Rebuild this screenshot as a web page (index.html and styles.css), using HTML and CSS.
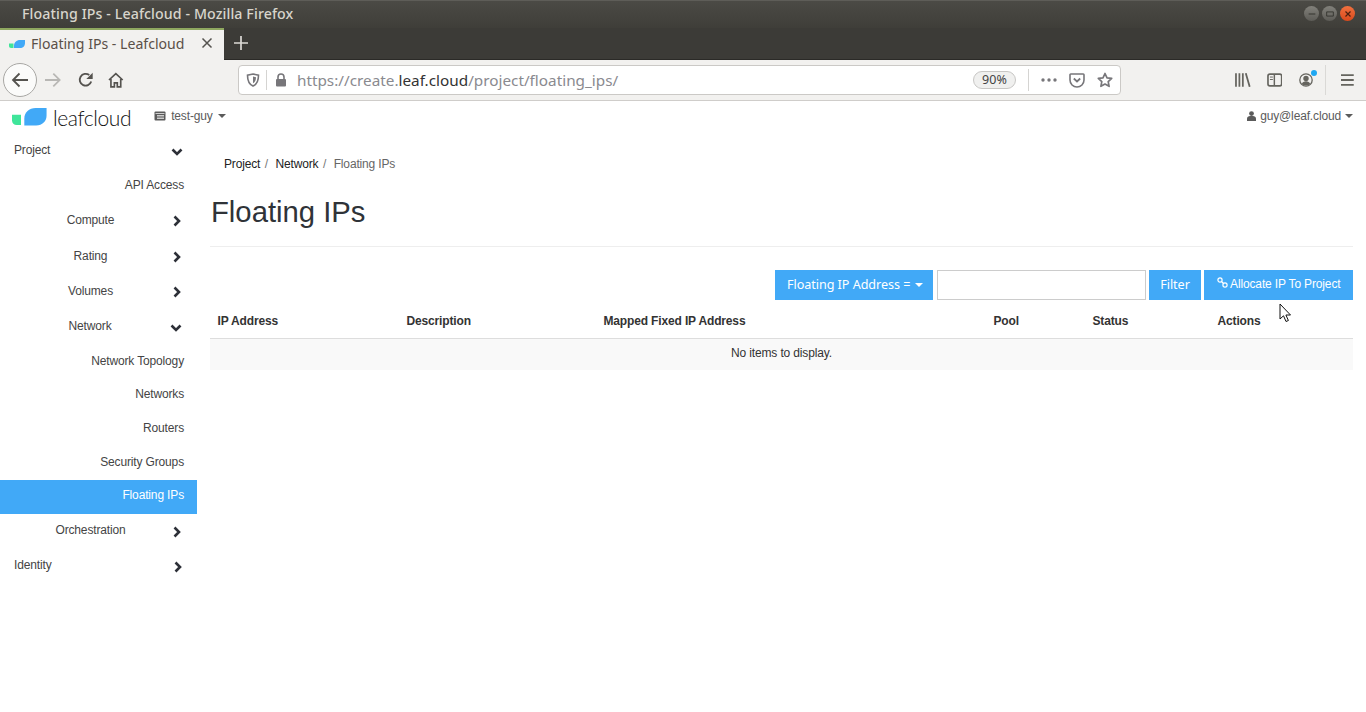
FILE: index.html
```html
<!DOCTYPE html>
<html lang="en">
<head>
<meta charset="utf-8">
<title>Floating IPs - Leafcloud</title>
<link rel="stylesheet" href="styles.css">
</head>
<body>
<div class="browser">
  <div class="titlebar">
    <span class="window-title">Floating IPs - Leafcloud - Mozilla Firefox</span>
    <div class="window-controls">
      <span class="win-btn"><svg width="12" height="12" viewBox="0 0 12 12"><path d="M2 6h8" stroke="#35342f" stroke-width="1.2"/></svg></span>
      <span class="win-btn"><svg width="12" height="12" viewBox="0 0 12 12"><path d="M2 3.5h8v5H2z" fill="none" stroke="#35342f" stroke-width="1.1"/></svg></span>
      <span class="win-btn win-close"><svg width="12" height="12" viewBox="0 0 12 12"><path d="M3 3l6 6M9 3l-6 6" stroke="#4a2010" stroke-width="1.4"/></svg></span>
    </div>
  </div>
  <div class="tabstrip">
    <div class="tab">
      <svg class="favicon" width="16" height="8" viewBox="0 0 16 8"><path d="M0 3.5h4.5V8H2C.8 8 0 7.2 0 6z" fill="#3fe59a"/><path d="M5 5.5C5 2.5 7.5 0 11 0h5v3c0 3-2 5-5 5H5z" fill="#41a9f7"/></svg>
      <span class="tab-title">Floating IPs - Leafcloud</span>
      <svg class="tab-close" width="12" height="12" viewBox="0 0 12 12"><path d="M1.5 1.5l9 9M10.5 1.5l-9 9" stroke="#55534f" stroke-width="1.5"/></svg>
    </div>
    <svg class="new-tab" width="14" height="14" viewBox="0 0 14 14"><path d="M7 0v14M0 7h14" stroke="#dcdad5" stroke-width="1.7"/></svg>
  </div>
  <div class="toolbar">
    <span class="back-btn"><svg width="18" height="16" viewBox="0 0 18 16"><path d="M17 8H2M8.5 1.5L2 8l6.5 6.5" fill="none" stroke="#55534f" stroke-width="1.8"/></svg></span>
    <svg class="forward" width="18" height="16" viewBox="0 0 18 16"><path d="M1 8h15M9.500 1.500L16 8l-6.500 6.500" fill="none" stroke="#b8b7b4" stroke-width="1.800"/></svg>
    <svg class="reload" width="16" height="16" viewBox="0 0 16 16"><path d="M13.500 9.500A6 6 0 1 1 11.500 3" fill="none" stroke="#55534f" stroke-width="1.900"/><path d="M15 .5v6.500H8.500z" fill="#55534f"/></svg>
    <svg class="home" width="16" height="16" viewBox="0 0 16 16"><path d="M1 8l7-6.500L15 8M3 7v8h3.500v-4h3v4H13V7" fill="none" stroke="#55534f" stroke-width="1.700"/></svg>
    <div class="urlbar">
      <svg class="shield" width="14" height="14" viewBox="0 0 14 14"><path d="M7 1l5.500 1.200c0 5-1 8.800-5.500 10.800C2.500 11 1.500 7.200 1.500 2.200z" fill="none" stroke="#77767a" stroke-width="1.600"/><path d="M7 3.500l3 .7c0 2.500-.7 4.800-3 6z" fill="#77767a"/></svg>
      <span class="url-sep"></span>
      <svg class="lock" width="12" height="14" viewBox="0 0 12 14"><path d="M3 6V4a3 3 0 0 1 6 0v2" fill="none" stroke="#77767a" stroke-width="1.600"/><rect x="1" y="6" width="10" height="7.500" rx="1" fill="#77767a"/></svg>
      <span class="url"><span class="url-dim">https://create.</span>leaf.cloud<span class="url-dim">/project/floating_ips/</span></span>
      <span class="zoom-pill">90%</span>
      <span class="url-sep url-sep-long"></span>
      <svg class="dots" width="16" height="4" viewBox="0 0 16 4"><circle cx="2" cy="2" r="1.700"/><circle cx="8" cy="2" r="1.700"/><circle cx="14" cy="2" r="1.700"/></svg>
      <svg class="pocket" width="16" height="15" viewBox="0 0 16 15"><path d="M1.800 1h12.400c.5 0 .8.300.8.800V7a7 7 0 0 1-14 0V1.800c0-.5.300-.8.800-.8z" fill="none" stroke="#77767a" stroke-width="1.600"/><path d="M4.800 5.500L8 8.500l3.200-3" fill="none" stroke="#77767a" stroke-width="1.800"/></svg>
      <svg class="star" width="16" height="16" viewBox="0 0 16 16"><path d="M8 1.500l2 4.300 4.700.6-3.500 3.200.9 4.700L8 12l-4.100 2.300.9-4.700L1.300 6.400 6 5.800z" fill="none" stroke="#77767a" stroke-width="1.700" stroke-linejoin="round"/></svg>
    </div>
    <svg class="library" width="16" height="14" viewBox="0 0 16 14"><path d="M1 0v14M4.500 0v14M8 0v14M11 0l4 14" fill="none" stroke="#66655f" stroke-width="1.800"/></svg>
    <svg class="sidebar-icon" width="16" height="14" viewBox="0 0 16 14"><rect x="1" y="1" width="14" height="12" rx="2" fill="none" stroke="#66655f" stroke-width="1.700"/><path d="M7.500 1v12" stroke="#66655f" stroke-width="1.500"/><path d="M3 4h3M3 6.500h3" stroke="#66655f" stroke-width="1"/></svg>
    <span class="account"><svg width="14" height="14" viewBox="0 0 14 14"><circle cx="7" cy="7" r="6.200" fill="none" stroke="#66655f" stroke-width="1.300"/><circle cx="7" cy="5.500" r="2.700" fill="#66655f"/><path d="M2.800 11c.5-2 2.200-2.800 4.200-2.800s3.700.8 4.200 2.800A6 6 0 0 1 7 12.500 6 6 0 0 1 2.800 11z" fill="#66655f"/></svg><i class="account-dot"></i></span>
    <span class="tool-sep"></span>
    <svg class="menu" width="13" height="12" viewBox="0 0 13 12"><path d="M0 1h13M0 6h13M0 11h13" stroke="#66655f" stroke-width="1.800"/></svg>
  </div>
</div>

<header class="topbar">
  <a class="brand">
    <svg width="36" height="18" viewBox="0 0 38 19"><path d="M0 7h9.500v11H5c-3 0-5-2-5-5z" fill="#3fe59a"/><path d="M13 11C13 4.500 18 0 25 0h11.500v8c0 6-4.500 10.500-11 10.500H13z" fill="#41a9f7"/></svg>
    <span class="brand-name">leafcloud</span>
  </a>
  <span class="project-pick">
    <svg width="12" height="10" viewBox="0 0 12 10"><rect x=".5" y=".5" width="11" height="9" rx="1" fill="#5b5b5b"/><path d="M1.500 2.500h9M3 4.500h7M3 6h7M3 7.500h7" stroke="#fff" stroke-width=".7"/></svg>
    test-guy<i class="caret"></i>
  </span>
  <span class="user-pick">
    <svg width="9" height="10" viewBox="0 0 9 10"><circle cx="4.500" cy="2.600" r="2.400" fill="#5b5b5b"/><path d="M0 10V7.500C0 6 1.500 5 3 5h3c1.500 0 3 1 3 2.500V10z" fill="#5b5b5b"/></svg>
    guy@leaf.cloud<i class="caret"></i>
  </span>
</header>

<div class="layout">
  <nav class="sidenav">
    <div class="nav-row nav-top"><span class="nav-label">Project</span><svg class="chev" width="12" height="8" viewBox="0 0 12 8"><path d="M1.500 1.500L6 6l4.500-4.500" fill="none" stroke="#2d3038" stroke-width="2.600"/></svg></div>
    <div class="nav-row nav-link">API Access</div>
    <div class="nav-row nav-mid"><span class="nav-label">Compute</span><svg class="chev-r" width="8" height="12" viewBox="0 0 8 12"><path d="M1.500 1.500L6 6l-4.500 4.500" fill="none" stroke="#2d3038" stroke-width="2.600"/></svg></div>
    <div class="nav-row nav-mid"><span class="nav-label">Rating</span><svg class="chev-r" width="8" height="12" viewBox="0 0 8 12"><path d="M1.500 1.500L6 6l-4.500 4.500" fill="none" stroke="#2d3038" stroke-width="2.600"/></svg></div>
    <div class="nav-row nav-mid"><span class="nav-label">Volumes</span><svg class="chev-r" width="8" height="12" viewBox="0 0 8 12"><path d="M1.500 1.500L6 6l-4.500 4.500" fill="none" stroke="#2d3038" stroke-width="2.600"/></svg></div>
    <div class="nav-row nav-mid"><span class="nav-label">Network</span><svg class="chev" width="12" height="8" viewBox="0 0 12 8"><path d="M1.500 1.500L6 6l4.500-4.500" fill="none" stroke="#2d3038" stroke-width="2.600"/></svg></div>
    <div class="nav-row nav-link">Network Topology</div>
    <div class="nav-row nav-link nav-sub">Networks</div>
    <div class="nav-row nav-link nav-sub">Routers</div>
    <div class="nav-row nav-link nav-sub">Security Groups</div>
    <div class="nav-row nav-link nav-sub nav-active">Floating IPs</div>
    <div class="nav-row nav-mid nav-low"><span class="nav-label">Orchestration</span><svg class="chev-r" width="8" height="12" viewBox="0 0 8 12"><path d="M1.500 1.500L6 6l-4.500 4.500" fill="none" stroke="#2d3038" stroke-width="2.600"/></svg></div>
    <div class="nav-row nav-top nav-low"><span class="nav-label">Identity</span><svg class="chev-r" width="8" height="12" viewBox="0 0 8 12"><path d="M1.500 1.500L6 6l-4.500 4.500" fill="none" stroke="#2d3038" stroke-width="2.600"/></svg></div>
  </nav>
  <main class="content">
    <ol class="crumbs">
      <li>Project<span class="crumb-sep">/</span></li>
      <li>Network<span class="crumb-sep">/</span></li>
      <li class="crumb-current">Floating IPs</li>
    </ol>
    <h1 class="page-title">Floating IPs</h1>
    <div class="actions">
      <button class="btn btn-ui btn-field">Floating IP Address = <i class="caret caret-white"></i></button>
      <input class="filter-input" type="text" aria-label="Filter">
      <button class="btn btn-ui">Filter</button>
      <button class="btn btn-alloc"><svg width="11" height="11" viewBox="0 0 11 11"><circle cx="3" cy="3" r="2.100" fill="none" stroke="#fff" stroke-width="1.200"/><circle cx="8" cy="8" r="2.100" fill="none" stroke="#fff" stroke-width="1.200"/><path d="M4.500 4.500l2 2" stroke="#fff" stroke-width="1.200"/></svg> Allocate IP To Project</button>
    </div>
    <div class="table-head">
      <span>IP Address</span><span>Description</span><span>Mapped Fixed IP Address</span><span>Pool</span><span>Status</span><span>Actions</span>
    </div>
    <div class="table-empty">No items to display.</div>
  </main>
</div>
<svg class="cursor" width="13" height="20" viewBox="0 0 13 20"><path d="M1 1v15l3.500-3.200L7 18.500l2.400-1-2.500-5.500h4.600z" fill="#fff" stroke="#111" stroke-width="1"/></svg>
</body>
</html>
```
FILE: styles.css
```css
* { box-sizing: border-box; }
html, body { margin: 0; padding: 0; height: 100%; overflow: hidden; }
body { background: #fff; font-family: "Liberation Sans", Arial, sans-serif; font-size: 12px; letter-spacing: -.15px; color: #333; }

.browser { font-family: "Noto Sans", sans-serif; letter-spacing: normal; }
.titlebar { height: 28px; display: flex; align-items: center; padding: 0 11px 2px 22px; background: linear-gradient(#4b4a45, #3f3e39); border-top: 1px solid #5e5d58; }
.window-title { flex: 1; color: #d8d5cc; font-size: 14.2px; font-weight: 500; letter-spacing: .1px; }
.window-controls { display: flex; gap: 3px; }
.win-btn { width: 15px; height: 15px; border-radius: 50%; background: linear-gradient(#82817b, #5c5b56); display: flex; align-items: center; justify-content: center; }
.win-close { background: linear-gradient(#f0713f, #d9491c); }
.win-btn svg { width: 10px; height: 10px; }

.tabstrip { height: 32px; display: flex; align-items: center; padding-bottom: 2px; background: #3c3b37; border-bottom: 1px solid #2b2a27; }
.tab { width: 224px; height: 32px; display: flex; align-items: center; flex: none; margin-bottom: -2px; background: #f2f1ef; border-top: 2px solid #8fa860; padding: 0 11px 3px 9px; }
.favicon { margin-right: 6px; margin-top: 2px; }
.tab-title { flex: 1; font-size: 14.1px; color: #5a5048; }
.new-tab { margin-left: 10px; }

.toolbar { height: 41px; display: flex; align-items: center; background: #f2f1ef; border-bottom: 1px solid #cfcdca; padding: 0 12px 0 3px; }
.back-btn { width: 34px; height: 34px; flex: none; border-radius: 50%; border: 1px solid #a8a7a4; background: #fbfbfa; display: flex; align-items: center; justify-content: center; }
.forward { margin-left: 7px; }
.reload { margin-left: 16px; }
.home { margin-left: 15px; }
.urlbar { width: 883px; height: 30px; flex: none; margin-left: 114px; display: flex; align-items: center; background: #fff; border: 1px solid #cbc9c6; border-radius: 4px; padding: 0 7px; }
.shield { flex: none; margin-right: 6px; }
.url-sep { width: 1px; height: 20px; background: #d5d4d2; margin-right: 8px; flex: none; }
.lock { flex: none; margin-right: 10px; }
.url { flex: 1; font-size: 15.3px; color: #333; }
.url-dim { color: #8a8a8f; }
.zoom-pill { width: 43px; height: 18px; border: 1px solid #c8c7c5; border-radius: 9px; background: #f0f0ef; color: #444; font-size: 12.5px; line-height: 16px; text-align: center; margin-right: 12px; }
.url-sep-long { height: 22px; margin-right: 12px; }
.dots { fill: #77767a; margin-right: 12px; }
.pocket { margin-right: 12px; }
.library { margin-left: 114px; }
.sidebar-icon { margin-left: 16px; }
.account { position: relative; margin-left: 17px; display: flex; }
.account-dot { position: absolute; top: -3px; right: -4px; width: 6px; height: 6px; border-radius: 50%; background: #1ea7f2; }
.tool-sep { width: 1px; height: 30px; background: #dad9d6; margin-left: 12px; }
.menu { margin-left: 15px; }

.topbar { height: 31px; display: flex; align-items: center; padding: 0 13px 0 12px; color: #5b5b5b; }
.brand { display: flex; align-items: center; gap: 5px; }
.brand-name { font-family: Lato, sans-serif; font-weight: 300; font-size: 21px; color: #111; letter-spacing: -.4px; margin-top: 2px; }
.project-pick { margin-left: 23px; display: flex; align-items: center; gap: 5px; margin-top: -1px; }
.user-pick { margin-left: auto; display: flex; align-items: center; gap: 4px; margin-top: -1px; }
.caret { display: inline-block; width: 0; height: 0; border-left: 4px solid transparent; border-right: 4px solid transparent; border-top: 4px solid #5b5b5b; }
.caret-white { border-top-color: #fff; vertical-align: middle; margin-left: 1px; }

.layout { display: flex; }
.sidenav { width: 197px; flex: none; padding-top: .5px; color: #444; }
.nav-row { height: 35.2px; display: flex; align-items: center; }
.nav-top { padding-left: 14px; padding-right: 14px; justify-content: space-between; }
.nav-mid { padding-left: 14px; padding-right: 15px; }
.nav-mid .nav-label { flex: 1; text-align: center; padding-right: 4px; }
.nav-link { justify-content: flex-end; padding-right: 13px; }
.nav-sub { height: 33.7px; padding-bottom: 3px; }
.nav-active { background: #41a9f7; color: #fff; }
.nav-low { padding-bottom: 2px; }
.chev { flex: none; margin-top: 4px; }
.chev-r { flex: none; margin-top: 2px; margin-left: 2px; margin-right: 1px; }
.nav-low .chev-r { margin-top: 3px; }

.content { flex: 1; padding: 1px 13px 0; min-width: 0; }
.crumbs { list-style: none; margin: 0; padding: 24px 0 0 14px; display: flex; height: 39px; line-height: 15px; }
.crumbs li { color: #222; margin-right: 7.5px; white-space: pre; }
.crumbs li.crumb-current { color: #666; margin-right: 0; }
.crumb-sep { color: #777; margin-left: 4.5px; }
.page-title { margin: 0; height: 75px; font-size: 29.25px; font-weight: 400; letter-spacing: normal; color: #2f3338; line-height: 40px; padding: 20px 0 0 1px; border-bottom: 1px solid #eee; }
.actions { display: flex; justify-content: flex-end; gap: 3px; margin-top: 23px; height: 30px; }
.btn { border: 0; background: #41a9f7; color: #fff; height: 30px; padding: 0 12px; font-size: 12.6px; }
.btn-ui { font-family: "Noto Sans", sans-serif; letter-spacing: -.05px; padding: 0 0 2px; }
.btn-ui + .filter-input { margin-left: 1px; }
.btn-field { width: 158px; text-align: left; padding-left: 12px; }
.filter-input + .btn-ui { width: 52px; }
.btn-alloc { font-family: "Liberation Sans", Arial, sans-serif; font-size: 12px; letter-spacing: -.15px; width: 149px; padding: 0 0 2px; }
.filter-input { width: 209px; height: 30px; border: 1px solid #ccc; background: #fff; padding: 0; }
.table-head { display: grid; grid-template-columns: 189px 197px 390px 99px 125px 143px; height: 38.5px; align-items: center; padding-top: 4px; border-bottom: 1px solid #ddd; font-weight: 700; color: #333; }
.table-head span { padding-left: 7.5px; }
.table-empty { height: 31px; background: #f9f9f9; text-align: center; line-height: 29px; color: #333; }
.cursor { position: absolute; left: 1279px; top: 303px; }
```
